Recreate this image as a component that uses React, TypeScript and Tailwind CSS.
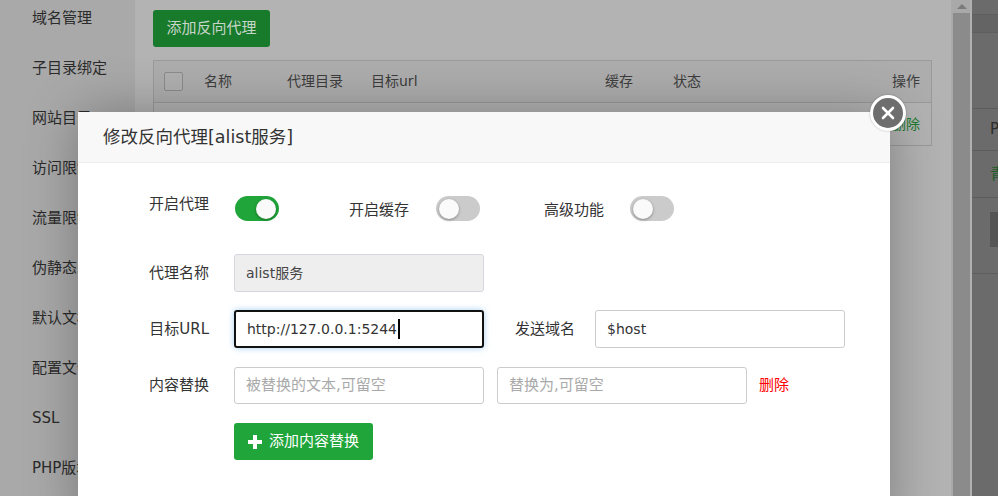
import React from 'react';

const font = "font-['DejaVu_Sans','Noto_Sans_CJK_SC',sans-serif]";

const sideItems = ['域名管理', '子目录绑定', '网站目录', '访问限制', '流量限制', '伪静态', '默认文档', '配置文件', 'SSL', 'PHP版本'];

const Toggle: React.FC<{ on?: boolean }> = ({ on }) => (
  <div
    className={`flex h-[25px] w-[44px] shrink-0 items-center rounded-full px-[3px] ${
      on ? 'justify-end bg-[#20a53a]' : 'justify-start bg-[#cbcbcb]'
    }`}
  >
    <div className="h-[20px] w-[20px] rounded-full bg-[#fafafa] shadow-[0_1px_3px_rgba(0,0,0,0.35)]" />
  </div>
);

const Field: React.FC<{ children: React.ReactNode; className?: string }> = ({ children, className = '' }) => (
  <div className={`flex h-full w-[250px] shrink-0 items-center rounded-[3px] px-[11px] text-[14px] ${className}`}>
    {children}
  </div>
);

export default function App() {
  return (
    <div className={`relative flex h-[496px] w-[998px] overflow-hidden bg-[#6b6b6b] ${font}`}>
      {/* site settings layer (under shade) */}
      <div className="flex h-full w-[972px] shrink-0">
        <div className="h-full w-[135px] shrink-0 bg-[#a9a9a9] pl-[32px]">
          <div className="-mt-[7px] flex flex-col">
            {sideItems.map((s) => (
              <div key={s} className="h-[50px] whitespace-nowrap text-[15px] leading-[50px] text-[#2b2b2b]">
                {s}
              </div>
            ))}
          </div>
        </div>

        <div className="h-full flex-1 bg-[#b3b3b3] pl-[18px] pr-[19px] pt-[10px]">
          <div className="flex h-[37px] w-[117px] items-center justify-center rounded-[3px] bg-[#187a2b] text-[15px] text-[#c6d6c9]">
            添加反向代理
          </div>
          <div className="mt-[13px] border border-[#9a9a9a] text-[14px] text-[#3d3d3d]">
            <div className="flex h-[42px] items-center border-b border-[#9a9a9a] bg-[#adadad]">
              <div className="w-[50px] shrink-0 pl-[10px]">
                <div className="h-[19px] w-[19px] rounded-[2px] border border-[#8c8c8c] bg-[#b0b0b0]" />
              </div>
              <div className="w-[83px] shrink-0">名称</div>
              <div className="w-[84px] shrink-0">代理目录</div>
              <div className="w-[234px] shrink-0">目标url</div>
              <div className="w-[68px] shrink-0">缓存</div>
              <div className="flex-1">状态</div>
              <div className="pr-[11px]">操作</div>
            </div>
            <div className="flex h-[42px] items-center justify-end pr-[11px]">
              <span className="text-[#1b7a2d]">删除</span>
            </div>
          </div>
        </div>

        {/* scrollbar */}
        <div className="flex h-full w-[19px] shrink-0 flex-col bg-[#a9a9a9] pl-[2px]">
          <div className="flex h-[13px] items-center justify-center">
            <div className="h-0 w-0 border-x-[5px] border-b-[5px] border-x-transparent border-b-[#7a7a7a]" />
          </div>
          <div className="flex-1 bg-[#8b8b8b]" />
        </div>
        <div className="h-full w-[2px] shrink-0 bg-[#b1b1b1]" />
      </div>

      {/* page underneath both shades */}
      <div className="flex h-full flex-1 flex-col overflow-hidden bg-[#6b6b6b] text-[15px]">
        <div className="h-[14px]" />
        <div className="h-[19px] border-y border-[#5e5e5e] bg-[#646464]" />
        <div className="h-[75px]" />
        <div className="flex h-[43px] items-center border-y border-[#5c5c5c] pl-[18px] text-[#2d2d2d]">P</div>
        <div className="flex h-[47px] items-center border-b border-[#5c5c5c] pl-[18px] text-[#1c5a25]">青</div>
        <div className="mt-[14px] ml-[18px] h-[35px] bg-[#555555]" />
        <div className="mt-[26px] border-t border-[#5e5e5e]" />
      </div>

      {/* modal */}
      <div className="absolute left-[78px] top-[112px] h-[420px] w-[812px] bg-white shadow-[1px_1px_50px_rgba(0,0,0,0.3)]">
        <div className="flex h-[51px] items-center border-b border-[#eeeeee] bg-[#f8f8f8] pl-[25px] text-[17.5px] text-[#333]">
          修改反向代理[alist服务]
        </div>
        <div className="pt-[33px] text-[15px] text-[#333]">
          <div className="flex h-[25px] items-center">
            <div className="mb-[9px] w-[131px] shrink-0 text-right">开启代理</div>
            <div className="ml-[26px]">
              <Toggle on />
            </div>
            <div className="ml-[70px] mt-[3px] w-[61px] shrink-0">开启缓存</div>
            <div className="ml-[26px]">
              <Toggle />
            </div>
            <div className="ml-[64px] mt-[3px] w-[61px] shrink-0">高级功能</div>
            <div className="ml-[25px]">
              <Toggle />
            </div>
          </div>

          <div className="mt-[33px] flex h-[38px] items-center">
            <div className="w-[131px] shrink-0 text-right">代理名称</div>
            <div className="ml-[25px] h-full">
              <Field className="border border-[#d6d6e0] bg-[#eeeeee] text-[#444]">alist服务</Field>
            </div>
          </div>

          <div className="mt-[18px] flex h-[38px] items-center">
            <div className="w-[131px] shrink-0 text-right">目标URL</div>
            <div className="ml-[25px] h-full">
              <Field className="border-2 border-[#111] px-[10px] text-[#333] shadow-[0_0_6px_rgba(102,175,233,0.6)]">
                <span>http://127.0.0.1:5244</span>
                <span className="ml-[1px] h-[20px] w-[2px] bg-black" />
              </Field>
            </div>
            <div className="ml-[31px] w-[60px] shrink-0">发送域名</div>
            <div className="ml-[20px] h-full">
              <Field className="border border-[#cccccc] text-[#333]">$host</Field>
            </div>
          </div>

          <div className="mt-[19px] flex h-[37px] items-center">
            <div className="w-[131px] shrink-0 text-right">内容替换</div>
            <div className="ml-[25px] h-full">
              <Field className="border border-[#cccccc] text-[15px] text-[#a9a9a9]">被替换的文本,可留空</Field>
            </div>
            <div className="ml-[13px] h-full">
              <Field className="border border-[#cccccc] text-[15px] text-[#a9a9a9]">替换为,可留空</Field>
            </div>
            <div className="ml-[12px] text-[#ff0000]">删除</div>
          </div>

          <div className="ml-[156px] mt-[19px] flex h-[37px] w-[139px] items-center rounded-[3px] bg-[#20a53a] pl-[14px] text-white">
            <svg width="14" height="14" viewBox="0 0 14 14" className="shrink-0">
              <rect x="5" y="0" width="4" height="14" fill="#fff" />
              <rect x="0" y="5" width="14" height="4" fill="#fff" />
            </svg>
            <span className="ml-[7px]">添加内容替换</span>
          </div>
        </div>
      </div>

      {/* close button */}
      <div className="absolute left-[870px] top-[95px] flex h-[36px] w-[36px] items-center justify-center rounded-full border-[3px] border-white bg-[#6e6e6e] shadow-[0_0_2px_rgba(0,0,0,0.3)]">
        <svg width="16" height="16" viewBox="0 0 16 16">
          <path d="M3 3 L13 13 M13 3 L3 13" stroke="#fff" strokeWidth="2.6" strokeLinecap="round" />
        </svg>
      </div>
    </div>
  );
}
